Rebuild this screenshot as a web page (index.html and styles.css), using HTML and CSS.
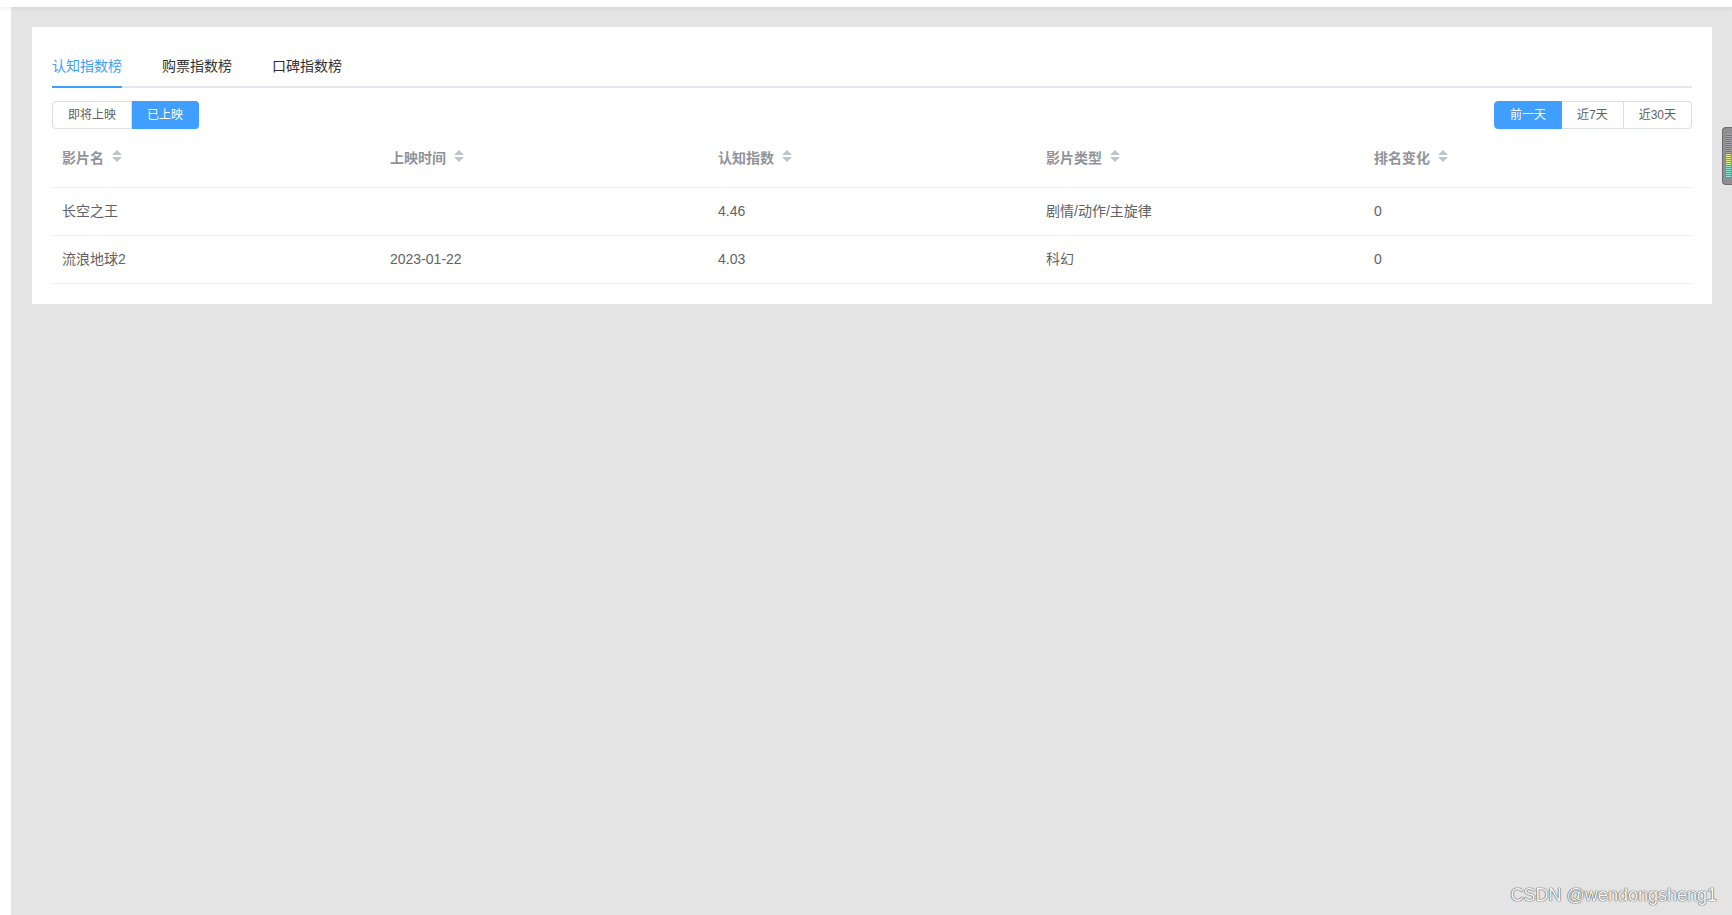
FILE: index.html
```html
<!DOCTYPE html>
<html>
  <head>
    <title>指数榜</title>
    <meta charset="UTF-8" />
    <meta name="viewport" content="width=device-width, initial-scale=1.0" />
    <link rel="stylesheet" href="styles.css">
  </head>
  <body>
    <div class="topbar"></div>

    <div class="main">
      <div class="card">
        <div class="tabs">
          <div class="tab active">认知指数榜</div>
          <div class="tab">购票指数榜</div>
          <div class="tab">口碑指数榜</div>
        </div>

        <div class="toolbar">
          <div class="btn-group">
            <button class="btn">即将上映</button>
            <button class="btn active">已上映</button>
          </div>
          <div class="btn-group">
            <button class="btn active">前一天</button>
            <button class="btn">近7天</button>
            <button class="btn">近30天</button>
          </div>
        </div>

        <table class="rank-table">
          <thead>
            <tr>
              <th><div class="cell">影片名<svg class="caret" width="24" height="34" viewBox="0 0 24 34"><polygon points="7,15 17,15 12,10" /><polygon points="7,17 17,17 12,22" /></svg></div></th>
              <th><div class="cell">上映时间<svg class="caret" width="24" height="34" viewBox="0 0 24 34"><polygon points="7,15 17,15 12,10" /><polygon points="7,17 17,17 12,22" /></svg></div></th>
              <th><div class="cell">认知指数<svg class="caret" width="24" height="34" viewBox="0 0 24 34"><polygon points="7,15 17,15 12,10" /><polygon points="7,17 17,17 12,22" /></svg></div></th>
              <th><div class="cell">影片类型<svg class="caret" width="24" height="34" viewBox="0 0 24 34"><polygon points="7,15 17,15 12,10" /><polygon points="7,17 17,17 12,22" /></svg></div></th>
              <th><div class="cell">排名变化<svg class="caret" width="24" height="34" viewBox="0 0 24 34"><polygon points="7,15 17,15 12,10" /><polygon points="7,17 17,17 12,22" /></svg></div></th>
            </tr>
          </thead>
          <tbody>
            <tr>
              <td>长空之王</td>
              <td></td>
              <td>4.46</td>
              <td>剧情/动作/主旋律</td>
              <td>0</td>
            </tr>
            <tr>
              <td>流浪地球2</td>
              <td>2023-01-22</td>
              <td>4.03</td>
              <td>科幻</td>
              <td>0</td>
            </tr>
          </tbody>
        </table>
      </div>
    </div>

    <!-- side widget -->
    <div class="side-widget"><div class="meter"></div></div>

    <div class="watermark">CSDN @wendongsheng1</div>
  </body>
</html>
```

FILE: styles.css
```css
html, body {
  margin: 0;
  height: 100%;
}
body {
  font-family: "Liberation Sans", "Noto Sans CJK SC", sans-serif;
  background-color: #fff;
  position: relative;
  overflow: hidden;
}
.topbar {
  height: 7px;
  background: #fff;
  position: relative;
  z-index: 1;
  box-shadow: 0 1px 4px rgba(0,0,0,0.08);
}
.main {
  margin-left: 11px;
  height: calc(100% - 7px);
  background-color: #e4e4e4;
  padding: 20px 20px 0 21px;
  box-sizing: border-box;
}
.card {
  background: #fff;
  padding: 20px 20px 20px;
}
.tabs {
  display: flex;
  gap: 40px;
  border-bottom: 2px solid #e4e7ed;
}
.tab {
  font-size: 14px;
  line-height: 39px;
  color: #303133;
  font-weight: normal;
  border-bottom: 2px solid transparent;
  margin-bottom: -2px;
  cursor: pointer;
}
.tab.active {
  color: #409eff;
  border-bottom-color: #409eff;
}
.toolbar {
  display: flex;
  justify-content: space-between;
  margin-top: 13px;
}
.btn-group {
  display: flex;
}
.btn {
  font-family: inherit;
  font-size: 12px;
  line-height: 12px;
  height: 28px;
  padding: 0 15px;
  background: #fff;
  color: #606266;
  border: 1px solid #dcdfe6;
  border-left: none;
  margin: 0;
  cursor: pointer;
}
.btn:first-child {
  border-left: 1px solid #dcdfe6;
  border-radius: 4px 0 0 4px;
}
.btn:last-child {
  border-radius: 0 4px 4px 0;
}
.btn.active {
  background: #409eff;
  border-color: #409eff;
  color: #fff;
}
.rank-table {
  width: 100%;
  border-collapse: collapse;
  table-layout: fixed;
  font-size: 14px;
}
.rank-table th {
  padding: 11px 10px 13px;
  text-align: left;
  color: #909399;
  font-weight: bold;
  border-bottom: 1px solid #ebeef5;
}
.rank-table th .cell {
  display: flex;
  align-items: center;
  height: 34px;
}
.caret {
  fill: #c0c4cc;
  margin-left: 1px;
}
.rank-table td {
  padding: 12px 10px;
  line-height: 23px;
  color: #606266;
  border-bottom: 1px solid #ebeef5;
}
.side-widget {
  position: absolute;
  top: 127px;
  right: 0;
  width: 9px;
  height: 56px;
  background: #8e8e93;
  border: 1px solid #6e6e72;
  border-right: none;
  border-radius: 4px 0 0 4px;
}
.meter {
  margin: 6px 0 0 3px;
  width: 5px;
  height: 44px;
  background: repeating-linear-gradient(to bottom, transparent 0, transparent 1px, rgba(0,0,0,0.35) 1px, rgba(0,0,0,0.35) 2px),
    linear-gradient(to bottom, #a9a9ad 0, #a9a9ad 45%, #e6e68c 45%, #d9ec8e 70%, #8ee6d4 70%, #8ee6d4 100%);
}
.watermark {
  position: absolute;
  right: 15px;
  bottom: 10px;
  font-size: 18px;
  line-height: 20px;
  color: #f7f7f7;
  text-shadow: 0 0 1px #555, 0 0 1px #555, 0 0 1px #777;
}
```
